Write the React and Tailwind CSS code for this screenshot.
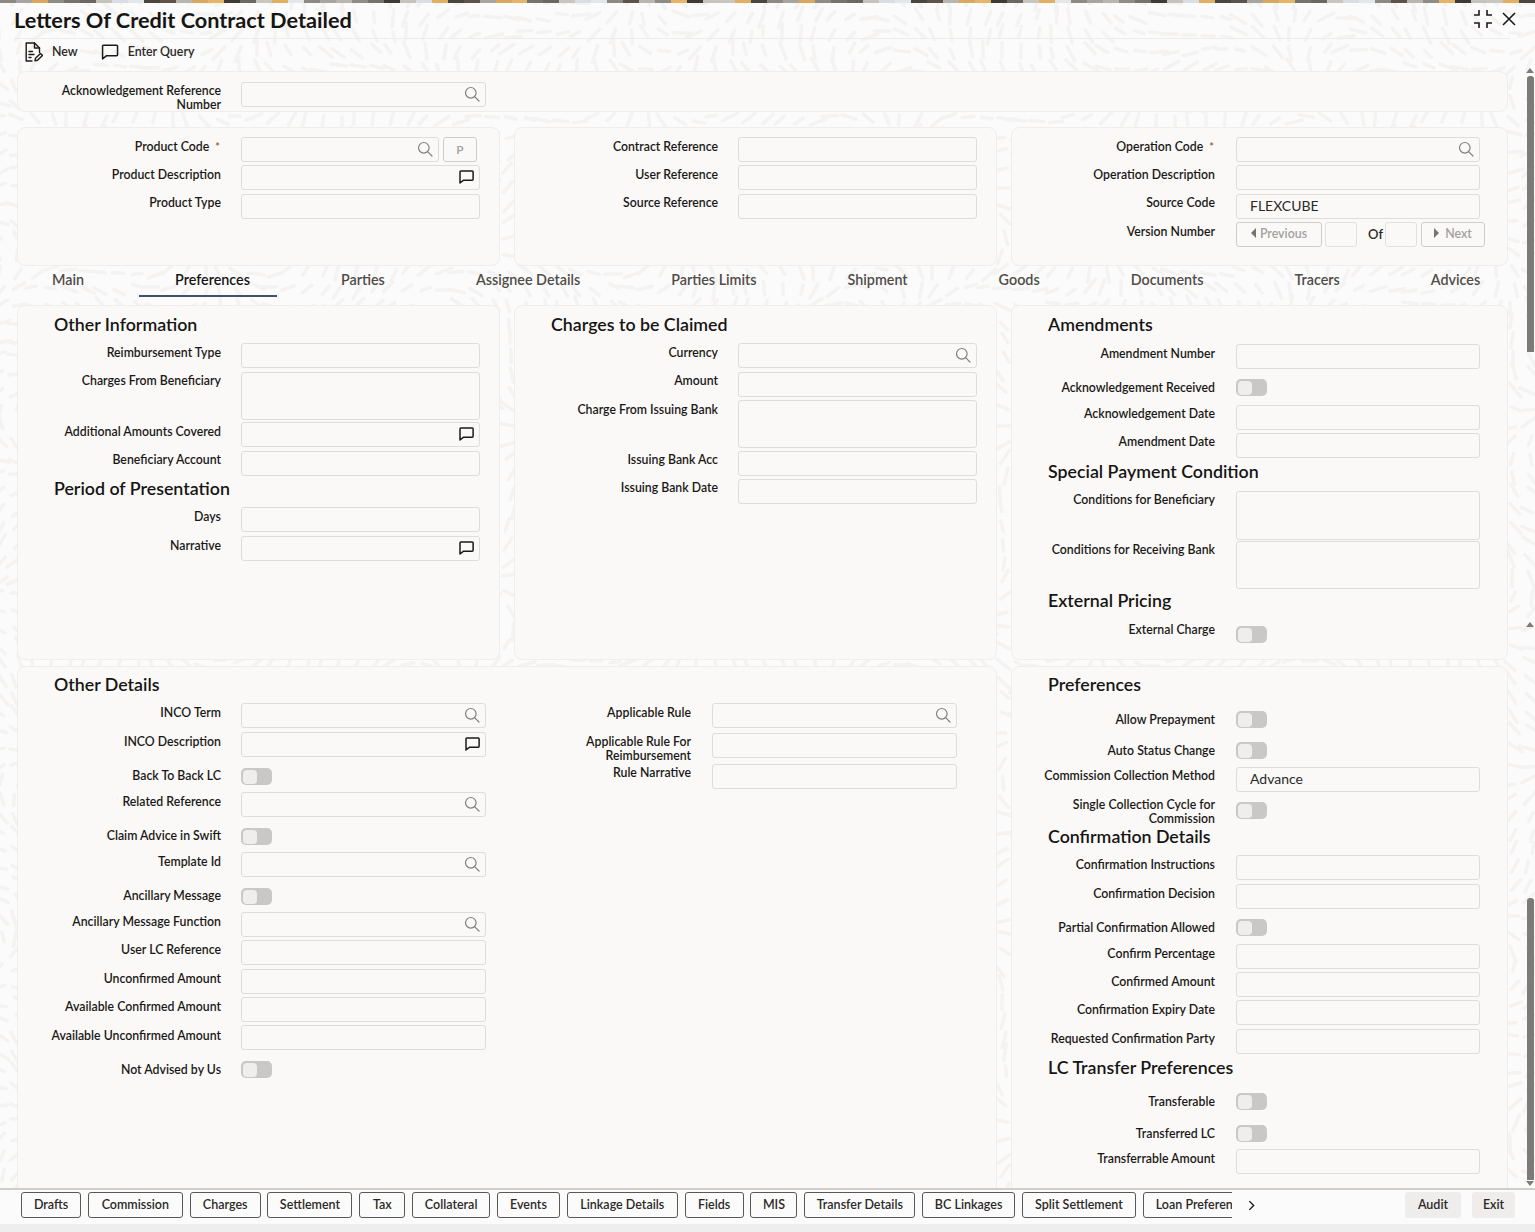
import React from "react";

const font = "font-['Lato','Noto_Sans',sans-serif]";

function patternPath() {
  let d = "";
  const step = 17;
  for (let y = 0; y < 1232; y += step) {
    for (let x = 0; x < 1535; x += step) {
      const a = Math.sin(x / 70) * 1.6 + Math.cos(y / 55) * 1.6 + Math.sin((x + y) / 190) * 1.4;
      const len = 5 + (((x * 7 + y * 13) % 11) / 11) * 4;
      const jx = ((x * 3 + y * 5) % 7) - 3;
      const jy = ((x * 5 + y * 3) % 7) - 3;
      const cx = x + jx;
      const cy = y + jy;
      const dx = Math.cos(a) * len;
      const dy = Math.sin(a) * len;
      d += `M${(cx - dx).toFixed(1)} ${(cy - dy).toFixed(1)}L${(cx + dx).toFixed(1)} ${(cy + dy).toFixed(1)}`;
    }
  }
  return d;
}

const PATTERN = patternPath();

const STRIP = ["#8d8a84", "#c9c6bf", "#e7b566", "#5d534a", "#d9dee6", "#77736c", "#a8a5a0", "#e0b060", "#3f3a35", "#b9b6b0", "#e3e6ea", "#6c6861", "#d8a95c", "#4b453f", "#c6c3bd", "#8f8b85"];

function SearchIcon() {
  return (
    <svg viewBox="0 0 16 16" className="h-[16px] w-[16px]" fill="none" stroke="#82807c" strokeWidth="1.2" strokeLinecap="round">
      <circle cx="6.8" cy="6.8" r="5.3" />
      <path d="M10.8 10.8L15 15" />
    </svg>
  );
}

function MessageIcon({ className = "h-[14px] w-[15px]", width = 1.5 }) {
  return (
    <svg viewBox="0 0 15 14" className={className} fill="none" stroke="#1c1a18" strokeWidth={width} strokeLinejoin="round">
      <path d="M1.8 1h11.4a.9.9 0 0 1 .9.9v7.4a.9.9 0 0 1-.9.9H4.6L1 13V1.8A.9.9 0 0 1 1.8 1z" />
    </svg>
  );
}

function NewIcon() {
  return (
    <svg viewBox="0 0 18 20" className="h-[20px] w-[18px]" fill="none" stroke="#1c1a18" strokeWidth="1.4" strokeLinejoin="round" strokeLinecap="round">
      <path d="M7 19H1.2V1h8.3l5 5v4.5" />
      <path d="M9.5 1v5h5" />
      <path d="M4 9.5h3.5M4 12.5h5M4 15.5h2" />
      <path d="M10 18.8l.5-2.6 5-4.8 2 2-5 4.9z" />
    </svg>
  );
}

function Input({ w = "w-[239px]", h = "h-[25px]", icon, value }) {
  return (
    <div className={`relative ${w} ${h} shrink-0 rounded-[3px] border-[1.5px] border-[#dfddda] bg-[#faf9f8]`}>
      {value && <span className="absolute left-[13px] top-[2px] text-[14px] leading-[18px] text-[#2b2927]">{value}</span>}
      {icon === "search" && (
        <span className="absolute right-[5px] top-[3px]">
          <SearchIcon />
        </span>
      )}
      {icon === "msg" && (
        <span className="absolute right-[5px] top-[4px]">
          <MessageIcon />
        </span>
      )}
    </div>
  );
}

function Label({ children, star, cls = "w-[203px]", lp = "pt-[3px]" }) {
  return (
    <div className={`${cls} ${lp} shrink-0 text-right text-[12.3px] font-semibold leading-[14px] text-[#1a1816]`}>
      {children}
      {star && <span className="ml-[6px] mr-[1px] text-[11px] text-[#a8501e]">*</span>}
    </div>
  );
}

function Field({ label, star, mt, w, h, icon, value, gap = "gap-5", labelCls, lp }) {
  return (
    <div className={`flex ${gap} ${mt}`}>
      <Label star={star} cls={labelCls} lp={lp}>{label}</Label>
      <Input w={w} h={h} icon={icon} value={value} />
    </div>
  );
}

function RField(props) {
  return <Field gap="gap-[21px]" w="w-[244px]" {...props} />;
}

function Toggle({ label, mt, tmt = "", gap = "gap-5", lp = "pt-[2px]" }) {
  return (
    <div className={`flex ${gap} ${mt}`}>
      <div className={`w-[203px] shrink-0 ${lp} text-right text-[12.3px] font-semibold leading-[14px] text-[#1a1816]`}>{label}</div>
      <div className={`relative h-[17px] w-[31px] shrink-0 rounded-[5px] bg-[#c9c8c6] ${tmt}`}>
        <div className="absolute left-[1.5px] top-[1.5px] h-[14px] w-[14px] rounded-[4px] bg-[#efeeed]" />
      </div>
    </div>
  );
}

function RToggle(props) {
  return <Toggle gap="gap-[21px]" {...props} />;
}

function Heading({ children, mt }) {
  return <h2 className={`ml-[36px] h-[24px] text-[17.8px] font-semibold leading-[24px] text-[#161513] ${mt}`}>{children}</h2>;
}

function Panel({ className = "", children }) {
  return <section className={`rounded-[8px] border border-[#efeeec] bg-[#faf9f8] ${className}`}>{children}</section>;
}

const TABS = ["Main", "Preferences", "Parties", "Assignee Details", "Parties Limits", "Shipment", "Goods", "Documents", "Tracers", "Advices"];

const FOOT = [
  ["Drafts", "w-[60px]"],
  ["Commission", "w-[95px]"],
  ["Charges", "w-[71px]"],
  ["Settlement", "w-[85px]"],
  ["Tax", "w-[46px]"],
  ["Collateral", "w-[78px]"],
  ["Events", "w-[63px]"],
  ["Linkage Details", "w-[111px]"],
  ["Fields", "w-[59px]"],
  ["MIS", "w-[47px]"],
  ["Transfer Details", "w-[111px]"],
  ["BC Linkages", "w-[93px]"],
  ["Split Settlement", "w-[114px]"],
];

const W245 = "w-[245px]";
const UP = "pt-[2px]";

export default function App() {
  return (
    <div className={`relative h-[1232px] w-[1535px] overflow-hidden bg-[#fcfbfb] ${font}`}>
      <svg className="absolute left-0 top-0 h-[1232px] w-[1535px]" viewBox="0 0 1535 1232" fill="none">
        <path d={PATTERN} stroke="#f4f3f1" strokeWidth="3.5" strokeLinecap="round" />
      </svg>

      <div className="relative flex h-[3px] w-full">
        {Array.from({ length: 96 }).map((_, i) => (
          <span key={i} className="h-[3px] flex-1" style={{ background: STRIP[(i * 5 + (i % 3)) % STRIP.length] }} />
        ))}
      </div>

      {/* scrollbars */}
      <div className="absolute left-[1526px] top-[68px] h-0 w-0 border-x-[4px] border-b-[5px] border-x-transparent border-b-[#7d7b78]" />
      <div className="absolute left-[1527px] top-[76px] h-[276px] w-[7px] rounded-t-[3px] bg-[#7d7b78]" />
      <div className="absolute left-[1526px] top-[622px] h-0 w-0 border-x-[4px] border-b-[5px] border-x-transparent border-b-[#7d7b78]" />
      <div className="absolute left-[1527px] top-[898px] h-[282px] w-[7px] rounded-t-[3px] bg-[#7d7b78]" />
      <div className="absolute left-[1526px] top-[1181px] h-0 w-0 border-x-[4px] border-t-[5px] border-x-transparent border-t-[#7d7b78]" />

      <header className="relative ml-[14px] mr-[25px] flex h-[36px] items-center justify-between border-b border-[#ececea]">
        <h1 className="pb-[2px] text-[21.7px] font-bold leading-[32px] text-[#161513]">Letters Of Credit Contract Detailed</h1>
        <div className="flex items-center gap-[9px] pb-[3px]">
          <svg viewBox="0 0 20 20" className="h-[20px] w-[20px]" fill="none" stroke="#1c1a18" strokeWidth="1.6">
            <path d="M6 1v5H1M14 1v5h5M6 19v-5H1M14 19v-5h5" />
          </svg>
          <svg viewBox="0 0 14 14" className="mr-[-6px] h-[14px] w-[14px]" fill="none" stroke="#1c1a18" strokeWidth="1.6">
            <path d="M1 1l12 12M13 1L1 13" />
          </svg>
        </div>
      </header>

      <div className="relative flex h-[32px] items-center pb-[6px] pl-[25px] text-[12.4px] font-semibold text-[#2b2927]">
        <NewIcon />
        <span className="ml-[9px]">New</span>
        <span className="ml-[23px]">
          <MessageIcon className="h-[16px] w-[18px]" width={1.3} />
        </span>
        <span className="ml-[9px]">Enter Query</span>
      </div>

      <main className="relative ml-[17px] w-[1491px]">
        <Panel className="h-[41px]">
          <Field mt="mt-[10px]" w={W245} lp="pt-[2px]" icon="search" label={<>Acknowledgement Reference<br />Number</>} />
        </Panel>

        <div className="mt-[15px] grid h-[139px] grid-cols-[483px_483px_497px] gap-x-[14px]">
          <Panel>
            <div className="mt-[9px] flex gap-5">
              <Label star>Product Code</Label>
              <Input w="w-[198px]" icon="search" />
              <button className="ml-[-16px] h-[25px] w-[34px] rounded-[3px] border-[1.5px] border-[#cfcdca] text-[12px] font-semibold text-[#a3a19e]">P</button>
            </div>
            <Field mt="mt-[3px]" icon="msg" label="Product Description" />
            <Field mt="mt-[4px]" lp={UP} label="Product Type" />
          </Panel>
          <Panel>
            <Field mt="mt-[9px]" label="Contract Reference" />
            <Field mt="mt-[3px]" label="User Reference" />
            <Field mt="mt-[4px]" lp={UP} label="Source Reference" />
          </Panel>
          <Panel>
            <RField mt="mt-[9px]" icon="search" star label="Operation Code" />
            <RField mt="mt-[3px]" label="Operation Description" />
            <RField mt="mt-[4px]" lp={UP} value="FLEXCUBE" label="Source Code" />
            <div className="mt-[3px] flex gap-[21px]">
              <Label>Version Number</Label>
              <div className="flex items-center text-[12.4px] font-semibold text-[#a3a19e]">
                <button className="flex h-[25px] w-[86px] items-center justify-center gap-[4px] rounded-[3px] border-[1.5px] border-[#cfcdca]">
                  <span className="mb-[3px] h-0 w-0 border-y-[5px] border-r-[5px] border-y-transparent border-r-[#77746f]" />
                  Previous
                </button>
                <div className="ml-[3px] h-[25px] w-[32px] rounded-[3px] border-[1.5px] border-[#e3e1de]" />
                <span className="ml-[11px] w-[17px] text-[13px] text-[#2b2927]">Of</span>
                <div className="h-[25px] w-[32px] rounded-[3px] border-[1.5px] border-[#e3e1de]" />
                <button className="ml-[4px] flex h-[25px] w-[64px] items-center justify-center gap-[6px] rounded-[3px] border-[1.5px] border-[#cfcdca]">
                  <span className="mb-[3px] h-0 w-0 border-y-[5px] border-l-[5px] border-y-transparent border-l-[#77746f]" />
                  Next
                </button>
              </div>
            </div>
          </Panel>
        </div>

        <nav className="ml-[3px] flex h-[31px] gap-[27px] whitespace-nowrap text-[14.33px] font-semibold">
          {TABS.map((t) =>
            t === "Preferences" ? (
              <div key={t} className="ml-[-4px] mr-[5px] flex h-[31px] shrink-0 items-center border-b-2 border-[#43506b] pb-[2px] pl-9 pr-[27px] text-[#161513]">{t}</div>
            ) : (
              <div key={t} className="flex h-[31px] shrink-0 items-center px-8 pb-[4px] text-[#4f4c48]">{t}</div>
            )
          )}
        </nav>

        <div className="mt-[8px] grid h-[355px] grid-cols-[483px_483px_497px] gap-x-[14px]">
          <Panel>
            <Heading mt="mt-[6px]">Other Information</Heading>
            <Field mt="mt-[7px]" label="Reimbursement Type" />
            <Field mt="mt-[4px]" lp={UP} h="h-[48px]" label="Charges From Beneficiary" />
            <Field mt="mt-[2px]" icon="msg" label="Additional Amounts Covered" />
            <Field mt="mt-[4px]" lp={UP} label="Beneficiary Account" />
            <Heading mt="mt-0">Period of Presentation</Heading>
            <Field mt="mt-[7px]" label="Days" />
            <Field mt="mt-[4px]" icon="msg" label="Narrative" />
          </Panel>
          <Panel>
            <Heading mt="mt-[6px]">Charges to be Claimed</Heading>
            <Field mt="mt-[7px]" icon="search" label="Currency" />
            <Field mt="mt-[4px]" lp={UP} label="Amount" />
            <Field mt="mt-[3px]" h="h-[48px]" label="Charge From Issuing Bank" />
            <Field mt="mt-[3px]" lp={UP} label="Issuing Bank Acc" />
            <Field mt="mt-[3px]" lp={UP} label="Issuing Bank Date" />
          </Panel>
          <Panel>
            <Heading mt="mt-[6px]">Amendments</Heading>
            <RField mt="mt-[8px]" label="Amendment Number" />
            <RToggle mt="mt-[10px]" label="Acknowledgement Received" />
            <RField mt="mt-[9px]" lp={UP} label="Acknowledgement Date" />
            <RField mt="mt-[3px]" lp={UP} label="Amendment Date" />
            <Heading mt="mt-[1px]">Special Payment Condition</Heading>
            <RField mt="mt-[8px]" lp={UP} h="h-[49px]" label="Conditions for Beneficiary" />
            <RField mt="mt-[1px]" lp={UP} h="h-[48px]" label="Conditions for Receiving Bank" />
            <Heading mt="mt-[-1px]">External Pricing</Heading>
            <RToggle mt="mt-[9px]" tmt="mt-[5px]" lp="pt-[2px]" label="External Charge" />
          </Panel>
        </div>

        <div className="mt-[6px] grid h-[530px] grid-cols-[980px_497px] gap-x-[14px]">
          <Panel>
            <Heading mt="mt-[5px]">Other Details</Heading>
            <div className="flex">
              <div className="w-[469px] shrink-0">
                <Field mt="mt-[7px]" w={W245} icon="search" label="INCO Term" />
                <Field mt="mt-[4px]" w={W245} icon="msg" label="INCO Description" />
                <Toggle mt="mt-[11px]" lp="pt-[1px]" label="Back To Back LC" />
                <Field mt="mt-[7px]" w={W245} icon="search" label="Related Reference" />
                <Toggle mt="mt-[11px]" lp="pt-[1px]" label="Claim Advice in Swift" />
                <Field mt="mt-[7px]" w={W245} icon="search" label="Template Id" />
                <Toggle mt="mt-[11px]" lp="pt-[1px]" label="Ancillary Message" />
                <Field mt="mt-[7px]" w={W245} icon="search" label="Ancillary Message Function" />
                <Field mt="mt-[3px]" w={W245} label="User LC Reference" />
                <Field mt="mt-[4px]" w={W245} label="Unconfirmed Amount" />
                <Field mt="mt-[3px]" w={W245} label="Available Confirmed Amount" />
                <Field mt="mt-[3px]" w={W245} lp="pt-[4px]" label="Available Unconfirmed Amount" />
                <Toggle mt="mt-[11px]" label="Not Advised by Us" />
              </div>
              <div>
                <Field mt="mt-[7px]" w={W245} gap="gap-[21px]" labelCls="w-[204px]" icon="search" label="Applicable Rule" />
                <Field mt="mt-[5px]" w={W245} gap="gap-[21px]" labelCls="w-[204px]" lp="pt-[2px]" label={<>Applicable Rule For<br />Reimbursement</>} />
                <Field mt="mt-[1px]" w={W245} gap="gap-[21px]" labelCls="w-[204px]" lp={UP} label="Rule Narrative" />
              </div>
            </div>
          </Panel>
          <Panel>
            <Heading mt="mt-[5px]">Preferences</Heading>
            <RToggle mt="mt-[15px]" label="Allow Prepayment" />
            <RToggle mt="mt-[14px]" label="Auto Status Change" />
            <RField mt="mt-[8px]" lp={UP} value="Advance" label="Commission Collection Method" />
            <RToggle mt="mt-[4px]" tmt="mt-[6px]" lp="pt-[2px]" label={<>Single Collection Cycle for<br />Commission</>} />
            <Heading mt="mt-[-2px]">Confirmation Details</Heading>
            <RField mt="mt-[7px]" label="Confirmation Instructions" />
            <RField mt="mt-[4px]" label="Confirmation Decision" />
            <RToggle mt="mt-[10px]" label="Partial Confirmation Allowed" />
            <RField mt="mt-[8px]" label="Confirm Percentage" />
            <RField mt="mt-[3px]" label="Confirmed Amount" />
            <RField mt="mt-[3px]" label="Confirmation Expiry Date" />
            <RField mt="mt-[4px]" label="Requested Confirmation Party" />
            <Heading mt="mt-[1px]">LC Transfer Preferences</Heading>
            <RToggle mt="mt-[14px]" label="Transferable" />
            <RToggle mt="mt-[15px]" label="Transferred LC" />
            <RField mt="mt-[7px]" label="Transferrable Amount" />
          </Panel>
        </div>
      </main>

      <footer className="absolute bottom-0 left-0 w-full">
        <div className="h-[36px] w-full border-t-2 border-[#cfcecb] bg-[#fcfbfb]">
          <div className="flex h-[34px] items-start pt-[2px]">
            <div className="ml-[21px] flex w-[1211px] shrink-0 gap-[6.83px] overflow-hidden">
              {FOOT.map(([t, w]) => (
                <button key={t} className={`${w} h-[26px] shrink-0 rounded-[3px] border border-[#5b5854] bg-[#fcfbfb] pt-[1px] text-[12.5px] font-semibold text-[#2b2927]`}>{t}</button>
              ))}
              <button className="h-[26px] w-[120px] shrink-0 whitespace-nowrap rounded-l-[3px] border border-[#5b5854] bg-[#fcfbfb] pl-[12px] pt-[1px] text-left text-[12.5px] font-semibold text-[#2b2927]">Loan Preferences</button>
            </div>
            <svg viewBox="0 0 8 12" className="ml-[16px] mt-[8px] h-[11px] w-[7px]" fill="none" stroke="#1c1a18" strokeWidth="1.6">
              <path d="M1.5 1l5 5-5 5" />
            </svg>
            <button className="ml-[150px] h-[26px] w-[56px] rounded-[3px] bg-[#eeedeb] pt-[1px] text-[12.5px] font-semibold text-[#2b2927]">Audit</button>
            <button className="ml-[11px] h-[26px] w-[43px] rounded-[3px] bg-[#eeedeb] pt-[1px] text-[12.5px] font-semibold text-[#2b2927]">Exit</button>
          </div>
        </div>
        <div className="h-[8px] w-full bg-[#eeeeee]" />
      </footer>
    </div>
  );
}
